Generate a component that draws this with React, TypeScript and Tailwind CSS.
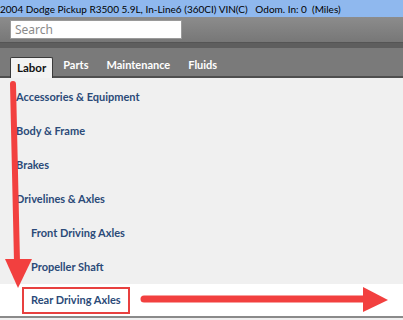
import React from 'react';

const items = [
  { label: 'Accessories & Equipment', indent: false },
  { label: 'Body & Frame', indent: false },
  { label: 'Brakes', indent: false },
  { label: 'Drivelines & Axles', indent: false },
  { label: 'Front Driving Axles', indent: true },
  { label: 'Propeller Shaft', indent: true },
  { label: 'Rear Driving Axles', indent: true, selected: true },
];

const tabs = ['Labor', 'Parts', 'Maintenance', 'Fluids'];

const App: React.FC = () => {
  return (
    <div className="relative w-[403px] h-[320px] overflow-hidden bg-[#f0f0f0] font-['Lato',sans-serif]">
      {/* vehicle title */}
      <div className="h-[17px] bg-[#8fb8ee] flex items-center font-['Lato',sans-serif] text-[10px] text-black whitespace-pre leading-none">
        2004 Dodge Pickup R3500 5.9L, In-Line6 (360CI) VIN(C)   Odom. In: 0  (Miles)
      </div>

      {/* search toolbar */}
      <div className="h-[25px] bg-gradient-to-b from-[#8c8c8c] to-[#777777] flex items-center pl-[10px]">
        <div className="w-[172px] h-[19px] bg-white border border-[#9a9a9a] flex items-center px-[4px] font-['Noto_Sans',sans-serif] text-[12px] text-[#8a8a8a]">
          Search
        </div>
      </div>
      <div className="h-[6px] bg-[#5e5e5e] border-t border-[#555555]" />

      {/* tabs */}
      <div className="h-[30px] bg-[#7a7a7a] border-b-2 border-[#4e4e4e] flex items-end pl-[10px] gap-[2px]">
        {tabs.map((t, i) =>
          i === 0 ? (
            <div
              key={t}
              className="h-[21px] -mb-[2px] px-[6px] bg-[#f3f3f3] border border-b-0 border-[#3a3a3a] rounded-t-[2px] flex items-center text-[11.5px] font-bold text-[#111111]"
            >
              {t}
            </div>
          ) : (
            <div key={t} className="h-[21px] px-[8px] flex items-center text-[11px] font-bold text-white">
              {t}
            </div>
          )
        )}
      </div>

      {/* tree list */}
      <div className="pt-[2px] flex flex-col">
        {items.map((it) => (
          <div
            key={it.label}
            className={`h-[34px] flex items-center text-[11px] font-bold text-[#2b4a78] ${
              it.indent ? 'pl-[31px]' : 'pl-[16px]'
            } ${it.selected ? 'bg-white border-b-2 border-[#8a8a8a]' : ''}`}
          >
            {it.selected ? (
              <span className="-ml-[9px] border-2 border-[#e8403f] px-[7px] h-[27px] flex items-center">
                {it.label}
              </span>
            ) : (
              it.label
            )}
          </div>
        ))}
      </div>

      {/* annotation arrows */}
      <svg className="absolute inset-0 pointer-events-none" width="403" height="320" viewBox="0 0 403 320">
        <line x1="13" y1="84" x2="17" y2="262" stroke="#f2403f" strokeWidth="6" strokeLinecap="round" />
        <polygon points="5,259 32,259 18,288" fill="#f2403f" />
        <line x1="144" y1="299" x2="368" y2="299" stroke="#f2403f" strokeWidth="7" strokeLinecap="round" />
        <polygon points="363,287 363,312 388,300" fill="#f2403f" />
      </svg>
    </div>
  );
};

export default App;
